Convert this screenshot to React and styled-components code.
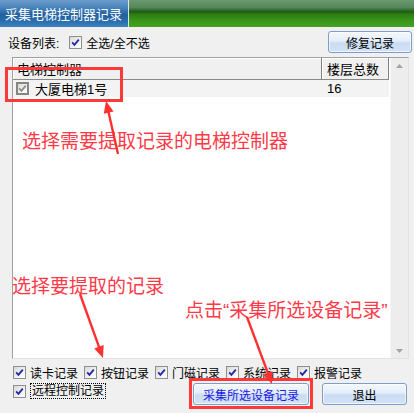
import styled, { createGlobalStyle } from 'styled-components';

const GlobalStyle = createGlobalStyle`
  body {
    margin: 0;
    background: #f0f0f0;
  }
`

const Window = styled.div`
  position: relative;
  width: 414px;
  height: 413px;
  overflow: hidden;
  background: #f0f0f0;
  display: flex;
  flex-direction: column;
  font-family: "Liberation Sans", "Noto Sans CJK SC", sans-serif;
  font-size: 12px;
  color: #000;
`

const TitleBar = styled.div`
  height: 27px;
  display: flex;
  flex: none;
`

const TitleTab = styled.div`
  width: 123px;
  padding-left: 5px;
  display: flex;
  align-items: center;
  color: #fff;
  font-size: 13px;
  background: linear-gradient(#6d9ccb 0%, #4482bb 30%, #22609f 55%, #2b6fae 80%, #3b84c3 100%);
  border-right: 1px solid #d8e6f2;
`

const TitleFill = styled.div`
  flex: 1;
  background: linear-gradient(#6c9a6c 0%, #54875a 28%, #2f6a2c 38%, #1c5a12 44%, #2b7c12 52%, #3a951a 75%, #45a21f 100%);
`

const Toolbar = styled.div`
  height: 30px;
  flex: none;
  display: flex;
  align-items: center;
  padding: 0 2px 0 8px;
`

const FieldLabel = styled.span`
  margin-right: 10px;
`

const CheckItem = styled.label`
  display: inline-flex;
  align-items: center;
  gap: 4px;
  white-space: nowrap;
`

const FocusText = styled.span`
  border: 1px dotted #000;
  padding: 0 1px;
  line-height: 14px;
`

const Box = styled.span`
  box-sizing: border-box;
  width: 13px;
  height: 13px;
  flex: none;
  display: inline-flex;
  align-items: center;
  justify-content: center;
  border: ${p => (p.$muted ? '2px solid #858585' : '1px solid #8e8f8f')};
  background: linear-gradient(135deg, #d9d9d4 0%, #f2f2ef 60%, #ffffff 100%);
`

const Button = styled.button`
  box-sizing: border-box;
  width: ${p => p.$w}px;
  height: 22px;
  margin: 0;
  padding: 0;
  font: inherit;
  color: ${p => (p.$accent ? '#1a1ae6' : '#000')};
  border: 1px solid #7e9dc8;
  border-radius: 3px;
  background: linear-gradient(#f5f9fe 0%, #e3edf9 45%, #cbdcf2 55%, #d3e3f6 100%);
  box-shadow: inset 0 0 0 1px rgba(255, 255, 255, 0.6);
`

const Push = styled.div`
  flex: 1;
`

const ListFrame = styled.div`
  height: 300px;
  flex: none;
  margin: 0 5px 0 12px;
  display: flex;
  border-top: 1px solid #a0a0a0;
  border-left: 1px solid #a0a0a0;
  border-right: 1px solid #e2e2e2;
  border-bottom: 1px solid #e2e2e2;
  background: #fff;
`

const ListMain = styled.div`
  flex: 1;
  display: flex;
  flex-direction: column;
`

const HeaderRow = styled.div`
  display: flex;
  height: 22px;
`

const HeaderCell = styled.div`
  box-sizing: border-box;
  width: ${p => p.$w}px;
  display: flex;
  align-items: center;
  padding-left: ${p => p.$pad}px;
  font-size: 13px;
  background: #f0f0f0;
  border-right: 1px solid #808080;
  border-bottom: 1px solid #8a8a8a;
  box-shadow: inset 1px 1px 0 #fff;
`

const Row = styled.div`
  display: flex;
  height: 17px;
  width: 376px;
  background: #f3f3f3;
  font-size: 13px;
`

const Cell = styled.div`
  box-sizing: border-box;
  width: ${p => p.$w}px;
  display: flex;
  align-items: center;
  gap: 6px;
  padding-left: ${p => p.$pad}px;
`

const ScrollBar = styled.div`
  width: 17px;
  flex: none;
  display: flex;
  flex-direction: column;
  justify-content: space-between;
  align-items: center;
  padding: 6px 0 5px;
  background: #ededed;
  border-left: 1px solid #f7f7f7;
`

const Options = styled.div`
  flex: 1;
  display: flex;
  flex-direction: column;
  padding: 7px 0 0 13px;
`

const OptionRow = styled.div`
  display: flex;
  gap: 6px;
  height: 13px;
  align-items: center;
`

const BottomRow = styled.div`
  margin-top: 4px;
  display: flex;
  align-items: flex-start;
`

const Buttons = styled.div`
  margin-left: auto;
  margin-right: 7px;
  display: flex;
  gap: 13px;
`

const Annotations = styled.div`
  position: absolute;
  inset: 0;
  pointer-events: none;
`

const MarkBox = styled.div`
  position: absolute;
  left: ${p => p.$x}px;
  top: ${p => p.$y}px;
  width: ${p => p.$w}px;
  height: ${p => p.$h}px;
  box-sizing: border-box;
  border: 3px solid #ff3838;
`

const Note = styled.div`
  position: absolute;
  left: ${p => p.$x}px;
  top: ${p => p.$y}px;
  font-size: 19px;
  line-height: 19px;
  color: #ff3a48;
  white-space: nowrap;
`

const ArrowLayer = styled.svg`
  position: absolute;
  inset: 0;
`

function Checkbox({ muted }) {
  return (
    <Box $muted={muted}>
      <svg width="9" height="9" viewBox="0 0 9 9">
        <path
          d="M1.2 4.4 L3.4 6.8 L7.8 1.6"
          fill="none"
          stroke={muted ? '#8c8c8c' : '#2226a8'}
          strokeWidth="1.8"
        />
      </svg>
    </Box>
  )
}

function Triangle({ up }) {
  return (
    <svg width="7" height="4" viewBox="0 0 7 4">
      <path d={up ? 'M0 4 L3.5 0 L7 4 Z' : 'M0 0 L3.5 4 L7 0 Z'} fill="#a3a3a3" />
    </svg>
  )
}

function Arrow({ from, to }) {
  const [x1, y1] = from;
  const [x2, y2] = to;
  const len = Math.hypot(x2 - x1, y2 - y1);
  const ux = (x2 - x1) / len;
  const uy = (y2 - y1) / len;
  const bx = x2 - ux * 12;
  const by = y2 - uy * 12;
  const px = -uy * 5;
  const py = ux * 5;
  return (
    <g fill="#ff3030" stroke="#ff3030">
      <line x1={x1} y1={y1} x2={bx + ux * 2} y2={by + uy * 2} strokeWidth="2.4" />
      <polygon points={`${x2},${y2} ${bx + px},${by + py} ${bx - px},${by - py}`} stroke="none" />
    </g>
  )
}

const records = ['读卡记录', '按钮记录', '门磁记录', '系统记录', '报警记录'];

function App() {
  return (
    <>
      <GlobalStyle />
      <Window>
        <TitleBar>
          <TitleTab>采集电梯控制器记录</TitleTab>
          <TitleFill />
        </TitleBar>

        <Toolbar>
          <FieldLabel>设备列表:</FieldLabel>
          <CheckItem>
            <Checkbox />
            全选/全不选
          </CheckItem>
          <Push />
          <Button $w={84}>修复记录</Button>
        </Toolbar>

        <ListFrame>
          <ListMain>
            <HeaderRow>
              <HeaderCell $w={309} $pad={4}>电梯控制器</HeaderCell>
              <HeaderCell $w={67} $pad={5}>楼层总数</HeaderCell>
            </HeaderRow>
            <Row>
              <Cell $w={309} $pad={3}>
                <Checkbox muted />
                大厦电梯1号
              </Cell>
              <Cell $w={67} $pad={5}>16</Cell>
            </Row>
          </ListMain>
          <ScrollBar>
            <Triangle up />
            <Triangle />
          </ScrollBar>
        </ListFrame>

        <Options>
          <OptionRow>
            {records.map(name => (
              <CheckItem key={name}>
                <Checkbox />
                {name}
              </CheckItem>
            ))}
          </OptionRow>
          <BottomRow>
            <CheckItem>
              <Checkbox />
              <FocusText>远程控制记录</FocusText>
            </CheckItem>
            <Buttons>
              <Button $w={116} $accent>采集所选设备记录</Button>
              <Button $w={85}>退出</Button>
            </Buttons>
          </BottomRow>
        </Options>

        <Annotations>
          <MarkBox $x={5} $y={67} $w={118} $h={35} />
          <MarkBox $x={189} $y={378} $w={124} $h={31} />
          <Note $x={22} $y={132}>选择需要提取记录的电梯控制器</Note>
          <Note $x={12} $y={277}>选择要提取的记录</Note>
          <Note $x={185} $y={301}>点击“采集所选设备记录”</Note>
          <ArrowLayer width="414" height="413" viewBox="0 0 414 413">
            <Arrow from={[118, 154]} to={[106, 101]} />
            <Arrow from={[80, 294]} to={[103, 358]} />
            <Arrow from={[247, 317]} to={[272, 384]} />
          </ArrowLayer>
        </Annotations>
      </Window>
    </>
  )
}

export default App
